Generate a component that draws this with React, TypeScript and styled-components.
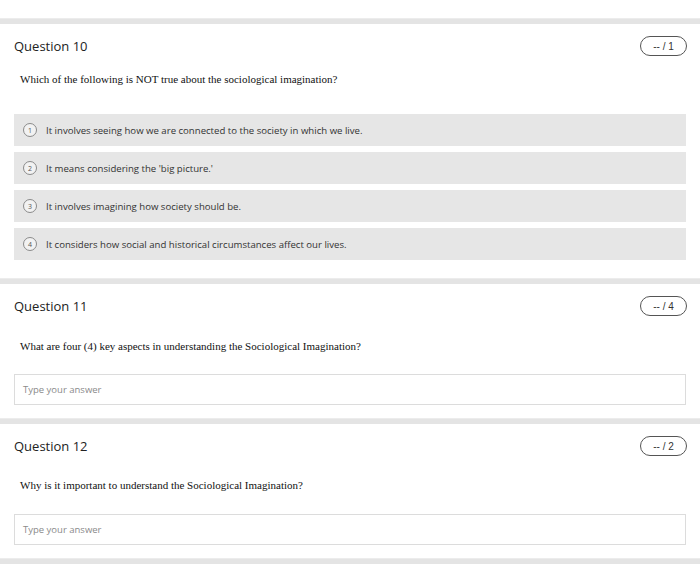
import React from "react";
import styled, { createGlobalStyle } from "styled-components";

const Global = createGlobalStyle`
  html, body { margin: 0; padding: 0; background: #fff; }
  body { font-family: "Open Sans", sans-serif; color: #333; }
`;

const Page = styled.div`
  padding-top: 18px;
  padding-bottom: 4px;
  display: flex;
  flex-direction: column;
`;

const Divider = styled.div`
  height: 6px;
  background: #e4e4e4;
  border-top: 1px solid #ececec;
  box-sizing: border-box;
`;

const Card = styled.section<{ $bottom: number }>`
  padding: 12px 14px ${(p) => p.$bottom}px 14px;
  display: flex;
  flex-direction: column;
`;

const Header = styled.div`
  display: flex;
  align-items: center;
  justify-content: space-between;
  height: 20px;
`;

const Title = styled.h2`
  margin: 0;
  font-family: "Open Sans", sans-serif;
  font-weight: 400;
  font-size: 13px;
  color: #222;
`;

const Badge = styled.div`
  box-sizing: border-box;
  width: 47px;
  height: 20px;
  border: 1px solid #555;
  border-radius: 10px;
  display: flex;
  align-items: center;
  justify-content: center;
  font-family: "Liberation Sans", Arial, sans-serif;
  font-size: 10px;
  color: #333;
  margin-right: -1px;
`;

const Prompt = styled.p<{ $top: number; $bottom: number }>`
  margin: ${(p) => p.$top}px 0 ${(p) => p.$bottom}px 6px;
  font-family: "Liberation Serif", "Times New Roman", serif;
  font-size: 11px;
  line-height: 14px;
  color: #111;
`;

const Options = styled.div`
  display: flex;
  flex-direction: column;
  gap: 6px;
`;

const Option = styled.div`
  height: 32px;
  background: #e6e6e6;
  display: flex;
  align-items: center;
  padding-left: 9px;
  gap: 9px;
`;

const Num = styled.span`
  box-sizing: border-box;
  width: 14px;
  height: 14px;
  border: 1px solid #8a8a8a;
  border-radius: 50%;
  display: flex;
  align-items: center;
  justify-content: center;
  font-size: 7px;
  color: #555;
  background: #f2f2f2;
`;

const OptionText = styled.span`
  font-size: 9.6px;
  color: #333;
`;

const Answer = styled.div`
  box-sizing: border-box;
  height: 31px;
  border: 1px solid #dcdcdc;
  display: flex;
  align-items: center;
  padding-left: 8px;
  font-size: 9.5px;
  color: #8a8a8a;
`;

const opts = [
  "It involves seeing how we are connected to the society in which we live.",
  "It means considering the 'big picture.'",
  "It involves imagining how society should be.",
  "It considers how social and historical circumstances affect our lives.",
];

export default function App() {
  return (
    <>
      <Global />
      <Page>
        <Divider />
        <Card $bottom={18}>
          <Header>
            <Title>Question 10</Title>
            <Badge>-- / 1</Badge>
          </Header>
          <Prompt $top={16} $bottom={28}>
            Which of the following is NOT true about the sociological imagination?
          </Prompt>
          <Options>
            {opts.map((o, i) => (
              <Option key={i}>
                <Num>{i + 1}</Num>
                <OptionText>{o}</OptionText>
              </Option>
            ))}
          </Options>
        </Card>
        <Divider />
        <Card $bottom={13}>
          <Header>
            <Title>Question 11</Title>
            <Badge>-- / 4</Badge>
          </Header>
          <Prompt $top={23} $bottom={21}>
            What are four (4) key aspects in understanding the Sociological Imagination?
          </Prompt>
          <Answer>Type your answer</Answer>
        </Card>
        <Divider />
        <Card $bottom={13}>
          <Header>
            <Title>Question 12</Title>
            <Badge>-- / 2</Badge>
          </Header>
          <Prompt $top={22} $bottom={22}>
            Why is it important to understand the Sociological Imagination?
          </Prompt>
          <Answer>Type your answer</Answer>
        </Card>
        <Divider />
      </Page>
    </>
  );
}
